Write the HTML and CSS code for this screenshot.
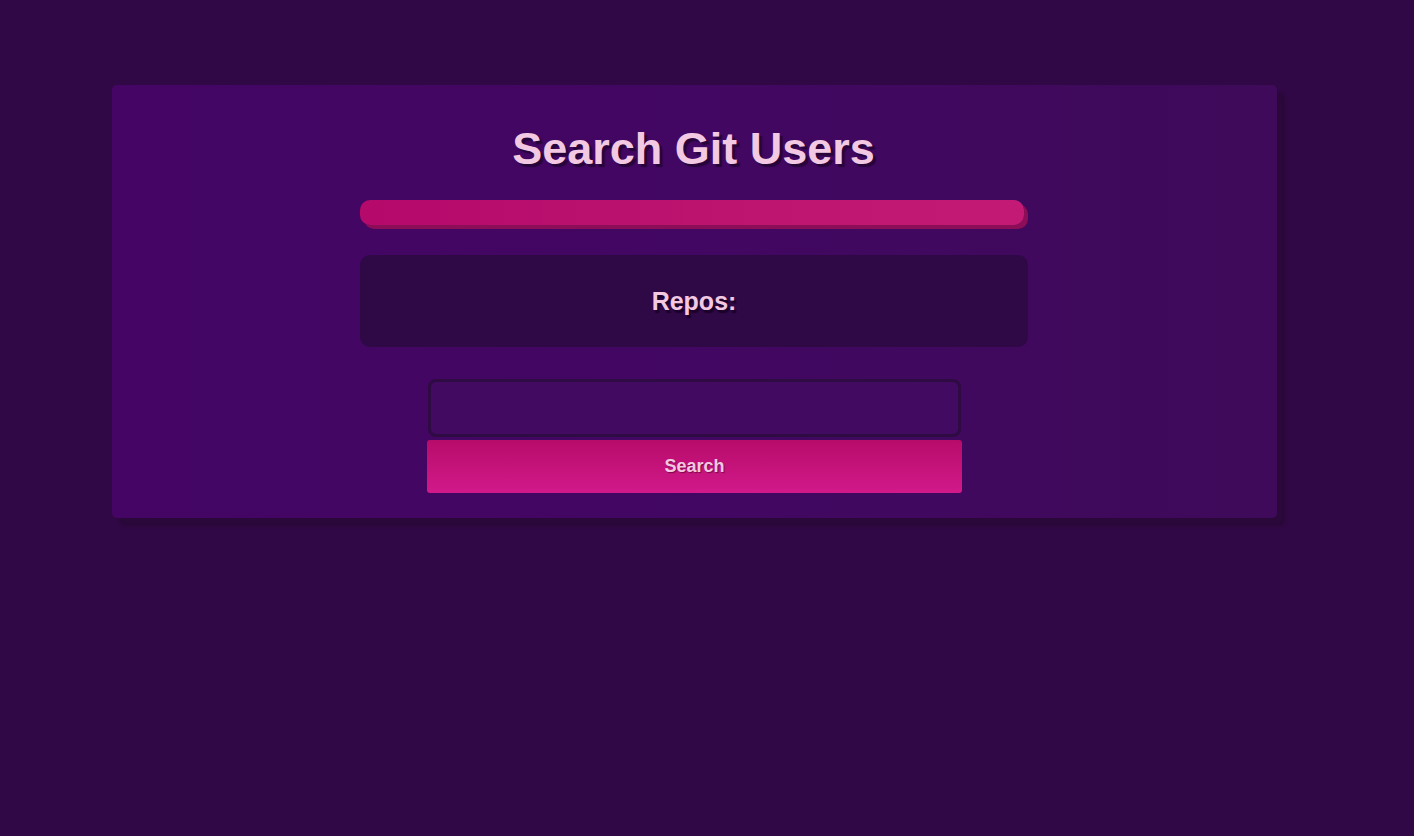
FILE: index.html
```html
<!DOCTYPE html>
<html lang="en">
<head>
<meta charset="utf-8">
<title>Search Git Users</title>
<link rel="stylesheet" href="styles.css">
</head>
<body>
  <main class="card">
    <h1 class="title">Search Git Users</h1>
    <div class="progress-wrap">
      <div class="progress"></div>
    </div>
    <section class="repos">
      <h2 class="repos-label">Repos:</h2>
    </section>
    <form class="search-form" onsubmit="return false;">
      <input class="search-input" type="text" autofocus>
      <button class="search-btn" type="submit">Search</button>
    </form>
  </main>
</body>
</html>
```

FILE: styles.css
```css
html, body {
  margin: 0;
  padding: 0;
  background: #300845;
  font-family: "Liberation Sans", Arial, sans-serif;
  height: 100%;
}

body {
  padding-top: 85px;
  box-sizing: border-box;
}

.card {
  margin-left: 112px;
  width: 1165px;
  box-sizing: border-box;
  background: linear-gradient(90deg, #440564 0%, #420762 50%, #3e0a59 100%);
  border-radius: 5px;
  box-shadow: 8px 8px 3px #2a0839;
  padding: 40px 0 25px;
  display: flex;
  flex-direction: column;
  align-items: center;
}

.title {
  margin: 0 0 0 -2px;
  font-size: 45px;
  line-height: 48px;
  font-weight: bold;
  color: #f2c8e2;
  text-shadow: 3px 3px 1px #27053a;
}

.progress-wrap {
  margin-top: 27px;
  width: 668px;
  margin-left: -1px;
}

.progress {
  width: 664px;
  height: 25px;
  border-radius: 10px;
  box-shadow: 4px 4px 0 #8c0e58;
  background: linear-gradient(90deg, #b5096b 0%, #bc136f 50%, #c31b75 100%);
}

.repos {
  margin-top: 30px;
  margin-left: -1px;
  width: 668px;
  height: 92px;
  background: #2f0846;
  border-radius: 10px;
  display: flex;
  align-items: center;
  justify-content: center;
}

.repos-label {
  margin: 0;
  font-size: 25px;
  font-weight: bold;
  color: #f2c8e2;
  text-shadow: 2px 3px 1px #1a0229;
}

.search-form {
  margin-top: 32px;
  display: flex;
  flex-direction: column;
  align-items: center;
}

.search-input {
  width: 533px;
  height: 58px;
  box-sizing: border-box;
  border: 3px solid #2e0b42;
  border-radius: 8px;
  background: #420a60;
  color: #f2c8e2;
  caret-color: #f2c8e2;
  text-align: center;
  font-family: "Liberation Sans", Arial, sans-serif;
  font-size: 26px;
  outline: none;
  margin: 0;
}

.search-btn {
  margin-top: 3px;
  width: 535px;
  height: 53px;
  border: none;
  border-radius: 3px;
  background: linear-gradient(180deg, #b70b6a 0%, #c4137a 50%, #d2198b 100%);
  color: #f2c8e2;
  font-family: "Liberation Sans", Arial, sans-serif;
  font-size: 18px;
  font-weight: bold;
  text-shadow: 1px 1px 1px #7a0a45;
  cursor: pointer;
}
```
